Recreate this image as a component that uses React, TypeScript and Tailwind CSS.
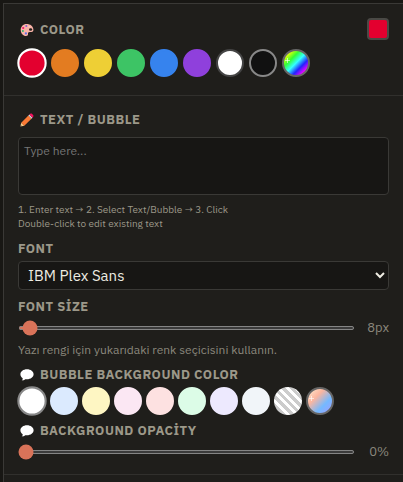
import { useState } from "react";
import type { ReactNode } from "react";

type Swatch = { name: string; fill: string };

const inks: Swatch[] = [
  { name: "Red", fill: "bg-[#e3002f] border-transparent" },
  { name: "Orange", fill: "bg-[#e37c21] border-[#e37c21]" },
  { name: "Yellow", fill: "bg-[#eecf35] border-[#eecf35]" },
  { name: "Green", fill: "bg-[#3dc465] border-[#3dc465]" },
  { name: "Blue", fill: "bg-[#3683ee] border-[#3683ee]" },
  { name: "Purple", fill: "bg-[#8f40dc] border-[#8f40dc]" },
  { name: "White", fill: "bg-white border-[#444444]" },
  { name: "Black", fill: "bg-[#111111] border-[#888888]" },
];

const bubbles: Swatch[] = [
  { name: "White", fill: "bg-white border-white" },
  { name: "Light blue", fill: "bg-[#dbeafe] border-[#dbeafe]" },
  { name: "Light yellow", fill: "bg-[#fef6c3] border-[#fef6c3]" },
  { name: "Light pink", fill: "bg-[#fbe7f3] border-[#fbe7f3]" },
  { name: "Light red", fill: "bg-[#fde1e1] border-[#fde1e1]" },
  { name: "Light green", fill: "bg-[#dcfce7] border-[#dcfce7]" },
  { name: "Lavender", fill: "bg-[#ede9fe] border-[#ede9fe]" },
  { name: "Mist", fill: "bg-[#f1f5f9] border-[#f1f5f9]" },
  {
    name: "Transparent",
    fill: "border-transparent bg-origin-border bg-[repeating-linear-gradient(45deg,#cccccc_0px,#cccccc_3px,#ffffff_3px,#ffffff_6px)]",
  },
];

function Palette() {
  return (
    <svg width="14" height="14" viewBox="0 0 14 14" aria-hidden="true">
      <path d="M6.600 1C3 1 .7 3.700.7 7c0 3.400 2.500 6 5.300 6 1.500 0 2.200-.8 2-2-.2-1.300.4-2 1.800-2h1.700c1.400 0 2-1 1.900-2.500C13.100 3.200 10.300 1 6.600 1Z" fill="#f9b3a7" />
      <ellipse cx="10.600" cy="6.500" rx="1.600" ry="1.200" fill="#1f1e1b" />
      <circle cx="6.300" cy="3.100" r="1" fill="#8a63d2" />
      <circle cx="3.200" cy="5" r="1.100" fill="#f1146b" />
      <circle cx="2.900" cy="8" r="1" fill="#2fb56a" />
      <circle cx="5.900" cy="10.400" r="1.100" fill="#5f6fe8" />
      <circle cx="9.200" cy="3.800" r=".8" fill="#f8d2c8" />
    </svg>
  );
}

function Pencil() {
  return (
    <svg width="14" height="14" viewBox="0 0 14 14" aria-hidden="true">
      <path d="M.4 13.600 1.200 9.800 4.300 12.800Z" fill="#fbd08a" />
      <path d="M.4 13.600.8 12l1.200 1.200Z" fill="#4a3a35" />
      <path d="M1.200 9.800 8.400 2.600l3.100 3.100-7.200 7.100Z" fill="#fb7a35" />
      <path d="m8.400 2.600 1-1 3.100 3.100-1 1Z" fill="#d6d6dc" />
      <path d="m9.400 1.600.9-.8c.6-.5 1.300-.4 1.800.1l1 1c.5.500.5 1.300 0 1.800l-.6 1Z" fill="#f5105f" />
    </svg>
  );
}

function Bubble() {
  return (
    <svg width="14" height="14" viewBox="0 0 14 14" aria-hidden="true">
      <path d="M7 1.300C3.300 1.300.4 3.500.4 6.300c0 1.700.9 3 2.300 3.900.1.800-.2 1.500-.9 2.200 1.500 0 2.700-.4 3.400-1.200.6.100 1.200.1 1.800.1 3.700 0 6.600-2.200 6.600-5S10.700 1.300 7 1.300Z" fill="#ffffff" />
    </svg>
  );
}

function Heading({ icon, children }: { icon?: ReactNode; children: ReactNode }) {
  return (
    <h2 className="flex h-4 items-center gap-[6px] text-[13px] leading-4 font-bold tracking-[0.04em] text-[#9c9889]">
      {icon && <span className="pl-[2px]">{icon}</span>}
      {children}
    </h2>
  );
}

function SwatchButton({ swatch, selected, ring, onPick }: { swatch: Swatch; selected: boolean; ring: string; onPick: () => void }) {
  return (
    <button
      type="button"
      aria-label={swatch.name}
      aria-pressed={selected}
      onClick={onPick}
      className={`size-7 shrink-0 rounded-full border-2 ${swatch.fill} ${selected ? `scale-105 ${ring}` : ""}`}
    />
  );
}

function CustomSwatch({ label, fill }: { label: string; fill: string }) {
  return (
    <button type="button" aria-label={label} className={`size-7 shrink-0 rounded-full border-2 border-[#666666] ${fill}`}>
      <svg width="8" height="8" viewBox="0 0 8 8" className="-mt-1" aria-hidden="true">
        <path d="M3.500 1v5M1 3.500h5" stroke="#ffffff" strokeOpacity=".6" fill="none" />
      </svg>
    </button>
  );
}

function Slider({ label, value, max, min, unit, onChange }: { label: string; value: number; min: number; max: number; unit: string; onChange: (n: number) => void }) {
  return (
    <div className="flex h-5 items-center">
      <input
        type="range"
        aria-label={label}
        min={min}
        max={max}
        value={value}
        onChange={(e) => onChange(Number(e.target.value))}
        className="h-1 min-w-0 flex-1 scheme-dark accent-[#d97359]"
      />
      <output className="w-[34px] text-right text-[13px] text-[#8b887d]">
        {value}
        {unit}
      </output>
    </div>
  );
}

export default function App() {
  const [ink, setInk] = useState(0);
  const [bubble, setBubble] = useState(0);
  const [size, setSize] = useState(8);
  const [opacity, setOpacity] = useState(0);
  const [text, setText] = useState("");

  return (
    <div className="min-h-screen bg-[#181714] pl-[3px] pt-[3px] font-['IBM_Plex_Sans',Roboto,sans-serif]">
      <main className="min-h-[479px] border-l border-t border-[#3a3936] bg-[#1f1e1b]">
        <section className="border-b border-[#31302d] px-[14px] pb-[18px] pt-[14px]">
          <div className="flex items-end justify-between">
            <div className="pb-[2px]">
              <Heading icon={<Palette />}>COLOR</Heading>
            </div>
            <button type="button" aria-label="Current color" className="size-[22px] rounded border-2 border-[#4a4945] bg-[#e3002f]" />
          </div>
          <div className="mt-[9px] flex flex-wrap gap-[5px]">
            {inks.map((s, i) => (
              <SwatchButton key={s.name} swatch={s} selected={i === ink} ring="border-white!" onPick={() => setInk(i)} />
            ))}
            <CustomSwatch label="Custom color" fill="bg-[linear-gradient(135deg,#ffff00_12%,#33ff33_32%,#33ffff_50%,#2222ff_68%,#ff00ff_86%)]" />
          </div>
        </section>

        <section className="border-b border-[#31302d] px-[14px] pb-3 pt-4">
          <Heading icon={<Pencil />}>TEXT / BUBBLE</Heading>
          <textarea
            aria-label="Text"
            placeholder="Type here..."
            value={text}
            onChange={(e) => setText(e.target.value)}
            className="mt-[9px] block h-[58px] w-full resize-none rounded border border-[#3a3936] bg-[#171614] px-[5px] py-[5px] text-xs text-[#eeece2] placeholder:text-[#757575]"
          />
          <p className="mt-2 text-[10px] leading-[14px] text-[#9c9889]">
            1. Enter text → 2. Select Text/Bubble → 3. Click
            <br />
            Double-click to edit existing text
          </p>
          <div className="mt-[10px]">
            <Heading>FONT</Heading>
          </div>
          <select
            aria-label="Font"
            className="mt-1 block h-[29px] w-full rounded border border-[#3a3936] bg-[#171614] px-[5px] text-[15px] text-[#eeece2]"
          >
            <option>IBM Plex Sans</option>
          </select>
          <div className="mt-[9px]">
            <Heading>FONT SİZE</Heading>
          </div>
          <div className="mt-[3px]">
            <Slider label="Font size" min={6} max={160} value={size} unit="px" onChange={setSize} />
          </div>
          <p className="mt-1 text-xs leading-4 text-[#8b887d]">Yazı rengi için yukarıdaki renk seçicisini kullanın.</p>
          <div className="mt-[9px]">
            <Heading icon={<Bubble />}>BUBBLE BACKGROUND COLOR</Heading>
          </div>
          <div className="mt-1 flex flex-wrap gap-1">
            {bubbles.map((s, i) => (
              <SwatchButton key={s.name} swatch={s} selected={i === bubble} ring="border-[#888888]!" onPick={() => setBubble(i)} />
            ))}
            <CustomSwatch label="Custom bubble color" fill="bg-[linear-gradient(135deg,#ffecd2,#fcb69f,#74b9ff,#a29bfe)]" />
          </div>
          <div className="mt-2">
            <Heading icon={<Bubble />}>BACKGROUND OPACİTY</Heading>
          </div>
          <div className="mt-[3px]">
            <Slider label="Background opacity" min={0} max={100} value={opacity} unit="%" onChange={setOpacity} />
          </div>
        </section>
      </main>
    </div>
  );
}
